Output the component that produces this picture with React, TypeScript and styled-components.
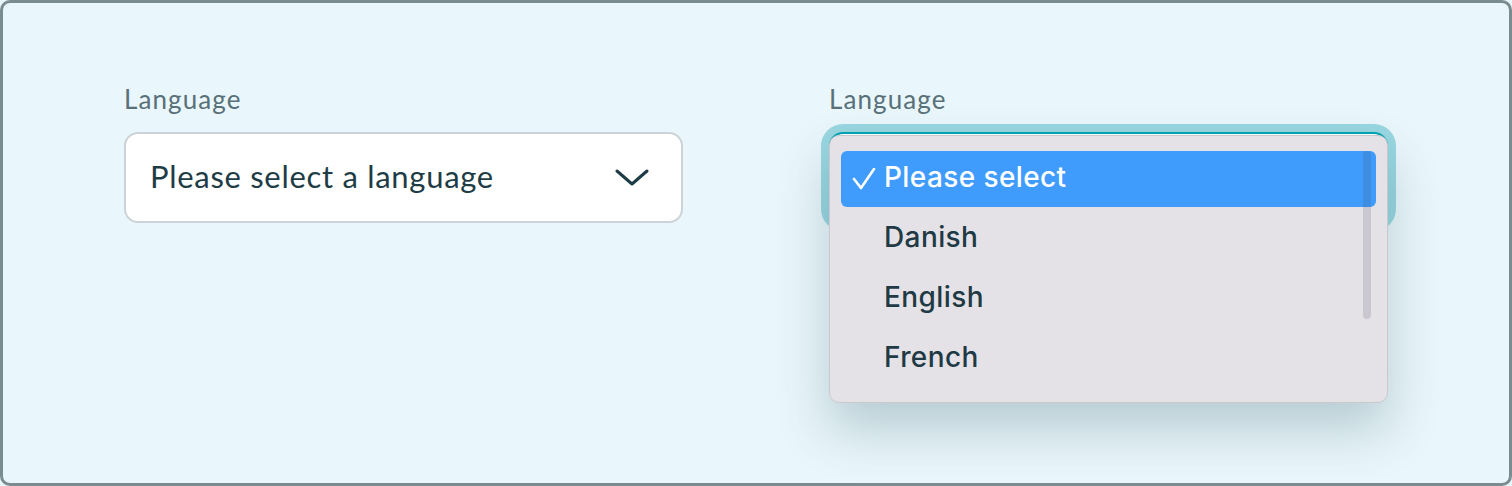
import styled, { createGlobalStyle } from 'styled-components';

const GlobalStyle = createGlobalStyle`
  html, body {
    margin: 0;
    padding: 0;
    background: #e9f6fb;
  }
  * {
    box-sizing: border-box;
  }
`;

const Frame = styled.div`
  width: 1512px;
  height: 486px;
  border: 3px solid #7b8c90;
  border-radius: 10px;
  background: #e9f6fb;
  padding: 80px 0 0 121px;
  display: grid;
  grid-template-columns: 559px 559px;
  column-gap: 146px;
  align-items: start;
  font-family: Lato, "Open Sans", sans-serif;
`;

const Field = styled.div`
  display: flex;
  flex-direction: column;
`;

const Label = styled.label`
  font-size: 26px;
  line-height: 32px;
  color: #587078;
  margin: 0 0 17px 0;
  letter-spacing: 1.1px;
`;

const SelectWrap = styled.div`
  position: relative;
`;

const SelectBox = styled.div<{ $focused?: boolean }>`
  height: 91px;
  border-radius: 14px;
  background: #fff;
  border: 2px solid ${p => (p.$focused ? '#00a3b5' : '#cdd4d7')};
  box-shadow: ${p => (p.$focused ? '0 0 0 8px #98d6e0' : 'none')};
  display: flex;
  align-items: center;
  justify-content: space-between;
  padding: 0 32px 4px 24px;
  font-size: 31px;
  color: #1e3c46;
  letter-spacing: 0.7px;
`;

const Chevron = () => (
  <svg width="34" height="18" viewBox="0 0 34 18" fill="none" style={{ marginTop: 4 }}>
    <polyline
      points="2,2 17,15 32,2"
      stroke="#1e3c46"
      strokeWidth="3"
      strokeLinecap="round"
      strokeLinejoin="round"
    />
  </svg>
);

const Menu = styled.ul`
  position: absolute;
  top: 3px;
  left: 0;
  right: 0;
  margin: 0;
  padding: 15px 11px 15px 11px;
  list-style: none;
  background: #e4e2e7;
  border: 1px solid #c9c9cd;
  border-radius: 10px;
  box-shadow: 0 26px 50px rgba(70, 105, 115, 0.3);
  display: flex;
  flex-direction: column;
  gap: 4px;
  font-family: Inter, "Noto Sans", sans-serif;
  font-weight: 500;
  font-size: 28px;
  letter-spacing: 0.4px;
`;

const Option = styled.li<{ $selected?: boolean }>`
  height: 56px;
  border-radius: 6px;
  display: flex;
  align-items: center;
  padding: 0 0 4px 11px;
  background: ${p => (p.$selected ? '#3f9bfc' : 'transparent')};
  color: ${p => (p.$selected ? '#fff' : '#1f3a44')};
`;

const Check = styled.span<{ $show?: boolean }>`
  width: 32px;
  display: flex;
  align-items: center;
  padding-top: 4px;
  visibility: ${p => (p.$show ? 'visible' : 'hidden')};
`;

const CheckIcon = () => (
  <svg width="24" height="22" viewBox="0 0 24 22" fill="none">
    <polyline
      points="2,11 9,20 22,1"
      stroke="#fff"
      strokeWidth="2.6"
      strokeLinecap="round"
      strokeLinejoin="round"
    />
  </svg>
);

const Scrollbar = styled.div`
  position: absolute;
  top: 15px;
  right: 16px;
  width: 8px;
  height: 168px;
  border-radius: 4px;
  background: rgba(60, 70, 90, 0.16);
`;

const options = ['Please select', 'Danish', 'English', 'French'];

export default function App() {
  return (
    <>
      <GlobalStyle />
      <Frame>
        <Field>
          <Label>Language</Label>
          <SelectBox>
            <span>Please select a language</span>
            <Chevron />
          </SelectBox>
        </Field>
        <Field>
          <Label>Language</Label>
          <SelectWrap>
            <SelectBox $focused />
            <Menu>
              {options.map((o, i) => (
                <Option key={o} $selected={i === 0}>
                  <Check $show={i === 0}>
                    <CheckIcon />
                  </Check>
                  {o}
                </Option>
              ))}
              <Scrollbar />
            </Menu>
          </SelectWrap>
        </Field>
      </Frame>
    </>
  );
}
